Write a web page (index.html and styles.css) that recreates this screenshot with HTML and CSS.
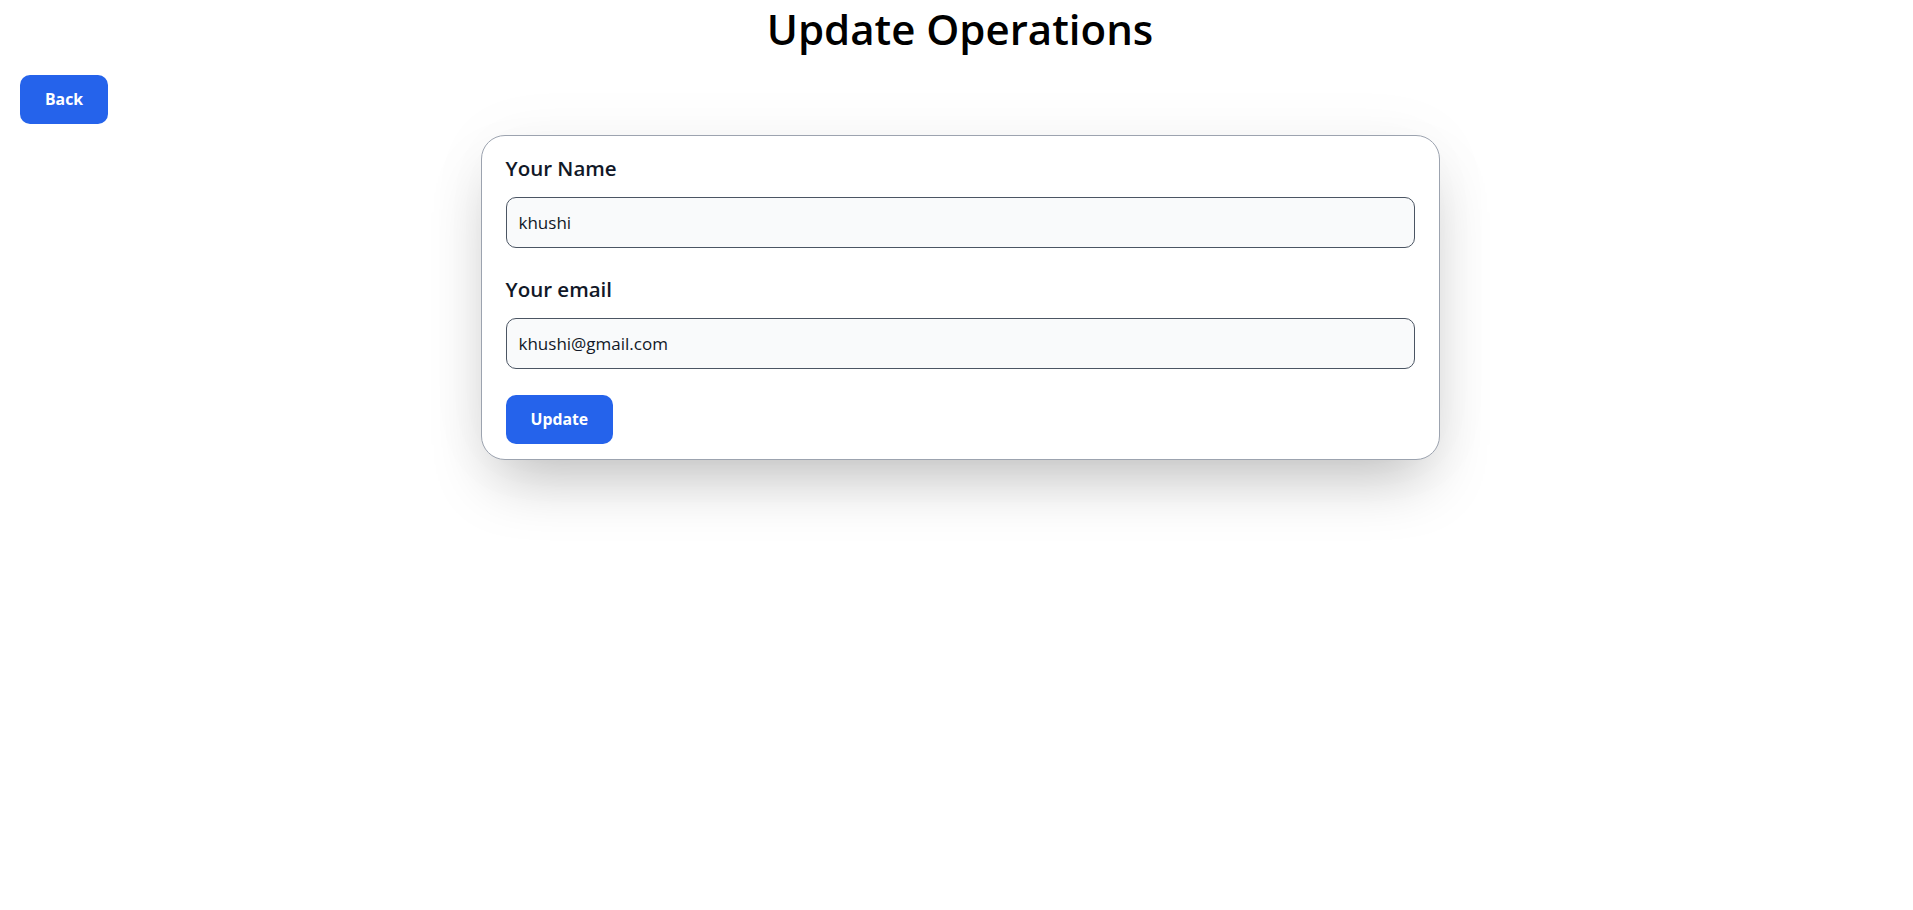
FILE: index.html
```html
<!DOCTYPE html>
<html lang="en">
<head>
<meta charset="utf-8">
<title>Update Operations</title>
<link rel="stylesheet" href="styles.css">
</head>
<body>
<div class="page">
  <h1 class="title">Update Operations</h1>
  <div class="toolbar">
    <button class="btn" type="button">Back</button>
  </div>
  <form class="card">
    <div class="field">
      <label class="label" for="name">Your Name</label>
      <input class="input" id="name" type="text" value="khushi">
    </div>
    <div class="field">
      <label class="label" for="email">Your email</label>
      <input class="input" id="email" type="email" value="khushi@gmail.com">
    </div>
    <button class="btn" type="submit">Update</button>
  </form>
</div>
</body>
</html>
```

FILE: styles.css
```css
body {
  margin: 0;
  background: #ffffff;
  font-family: "Open Sans", "Noto Sans", sans-serif;
}
.page {
  min-height: 100vh;
  padding-bottom: 40px;
}
.title {
  margin: 0;
  padding-left: 7px;
  text-align: center;
  font-size: 42px;
  line-height: 58px;
  font-weight: 600;
  color: #000000;
}
.toolbar {
  padding: 17px 20px 11px;
}
.btn {
  display: inline-block;
  height: 49px;
  padding: 0 25px;
  border: none;
  border-radius: 10px;
  background: #2563eb;
  color: #ffffff;
  font-family: "Open Sans", "Noto Sans", sans-serif;
  font-size: 15.8px;
  font-weight: 700;
  line-height: 25px;
}
.card {
  box-sizing: border-box;
  width: 959px;
  margin-left: calc(50% - 476px);
  padding: 17px 24px 15px;
  border: 1px solid #9ca3af;
  border-radius: 24px;
  background: #ffffff;
  box-shadow: 0 31px 62px -15px rgba(0, 0, 0, 0.25), 0 0 70px rgba(0, 0, 0, 0.035);
}
.field {
  display: flex;
  flex-direction: column;
  margin-bottom: 26px;
}
.label {
  font-size: 20.5px;
  line-height: 30px;
  font-weight: 600;
  color: #111827;
  margin-bottom: 14px;
}
.input {
  box-sizing: border-box;
  height: 51px;
  padding: 0 12px;
  border: 1px solid #4b5563;
  border-radius: 10px;
  background: #f9fafb;
  color: #111827;
  font-family: "Open Sans", "Noto Sans", sans-serif;
  font-size: 17px;
}
```
